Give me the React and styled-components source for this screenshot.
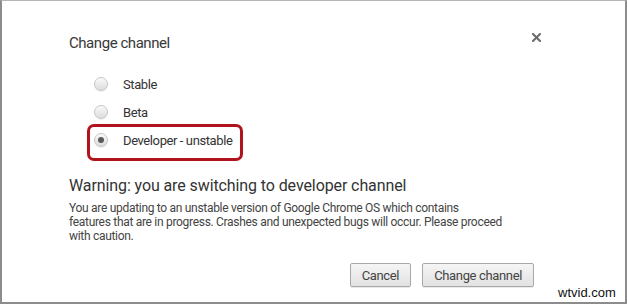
import React from 'react';
import styled, { createGlobalStyle } from 'styled-components';

const GlobalStyle = createGlobalStyle`
  html, body {
    margin: 0;
    padding: 0;
    background: #ffffff;
  }
`;

const channels = [
  { id: 'stable', label: 'Stable' },
  { id: 'beta', label: 'Beta' },
  { id: 'dev', label: 'Developer - unstable', checked: true, highlighted: true },
];

const App = () => {
  return (
    <>
      <GlobalStyle />
      <Frame>
        <Header>
          <Title>Change channel</Title>
          <CloseButton aria-label="Close">
            <svg width="9" height="9" viewBox="0 0 9 9">
              <path d="M1 1 L8 8 M8 1 L1 8" stroke="#6a6a6a" strokeWidth="2" strokeLinecap="square" />
            </svg>
          </CloseButton>
        </Header>

        <OptionList>
          {channels.map((c) => (
            <Option key={c.id} $highlighted={c.highlighted}>
              <Radio $checked={c.checked} />
              <Label>{c.label}</Label>
            </Option>
          ))}
        </OptionList>

        <WarningTitle>Warning: you are switching to developer channel</WarningTitle>
        <WarningText>
          You are updating to an unstable version of Google Chrome OS which contains
          <br />
          features that are in progress. Crashes and unexpected bugs will occur. Please proceed
          <br />
          with caution.
        </WarningText>

        <Footer>
          <Button>Cancel</Button>
          <Button>Change channel</Button>
        </Footer>

        <Watermark>wtvid.com</Watermark>
      </Frame>
    </>
  );
};

export default App;

const Frame = styled.div`
  position: relative;
  width: 627px;
  height: 304px;
  box-sizing: border-box;
  border: 2px solid #8c8c8c;
  border-top: 1px solid #b5b5b5;
  padding: 33px 84px 0 67px;
  font-family: Roboto, 'Noto Sans', sans-serif;
  color: #333333;
  background: #ffffff;
`;

const Header = styled.div`
  display: flex;
  justify-content: space-between;
  align-items: flex-start;
`;

const Title = styled.div`
  font-size: 15px;
  line-height: 18px;
  letter-spacing: -0.45px;
  color: #383838;
`;

const CloseButton = styled.div`
  width: 9px;
  height: 9px;
  margin-top: -1px;
  display: flex;

  svg {
    display: block;
  }
`;

const OptionList = styled.div`
  display: flex;
  flex-direction: column;
  margin-top: 18px;
  padding-left: 25px;
`;

const Option = styled.div`
  position: relative;
  display: flex;
  align-items: center;
  gap: 15px;
  height: 28px;
  width: fit-content;

  &::after {
    content: '';
    display: ${({ $highlighted }) => ($highlighted ? 'block' : 'none')};
    position: absolute;
    left: -7px;
    right: -11px;
    top: -2px;
    bottom: -7px;
    border: 3px solid #b0131c;
    border-radius: 7px;
  }
`;

const Radio = styled.span`
  position: relative;
  width: 14px;
  height: 14px;
  box-sizing: border-box;
  border-radius: 50%;
  border: 1px solid #c6c6c6;
  background: linear-gradient(#fafafa, #dcdcdc);
  box-shadow: 0 1px 1px rgba(0, 0, 0, 0.06);

  &::after {
    content: '';
    display: ${({ $checked }) => ($checked ? 'block' : 'none')};
    position: absolute;
    left: 3px;
    top: 3px;
    width: 6px;
    height: 6px;
    border-radius: 50%;
    background: #5a5a5a;
  }
`;

const Label = styled.span`
  font-size: 13px;
  letter-spacing: -0.4px;
  color: #333333;
`;

const WarningTitle = styled.div`
  margin-top: 22px;
  font-size: 16px;
  line-height: 20px;
  letter-spacing: -0.1px;
  color: #333333;
`;

const WarningText = styled.div`
  margin-top: 5px;
  font-size: 12px;
  line-height: 14px;
  letter-spacing: -0.3px;
  color: #444444;
  white-space: nowrap;
`;

const Footer = styled.div`
  display: flex;
  justify-content: flex-end;
  gap: 11px;
  margin-top: 20px;
  padding-right: 7px;
`;

const Button = styled.button`
  height: 24px;
  padding: 0 11px;
  font-family: Roboto, 'Noto Sans', sans-serif;
  font-size: 13px;
  letter-spacing: -0.35px;
  color: #444444;
  border: 1px solid #a8a8a8;
  border-radius: 2px;
  background: linear-gradient(#f5f5f5, #e2e2e2);
  box-shadow: 0 1px 0 rgba(0, 0, 0, 0.08);
`;

const Watermark = styled.div`
  position: absolute;
  left: 556px;
  top: 284px;
  font-family: 'Liberation Sans', Arial, sans-serif;
  font-size: 13px;
  color: #111111;
`;
